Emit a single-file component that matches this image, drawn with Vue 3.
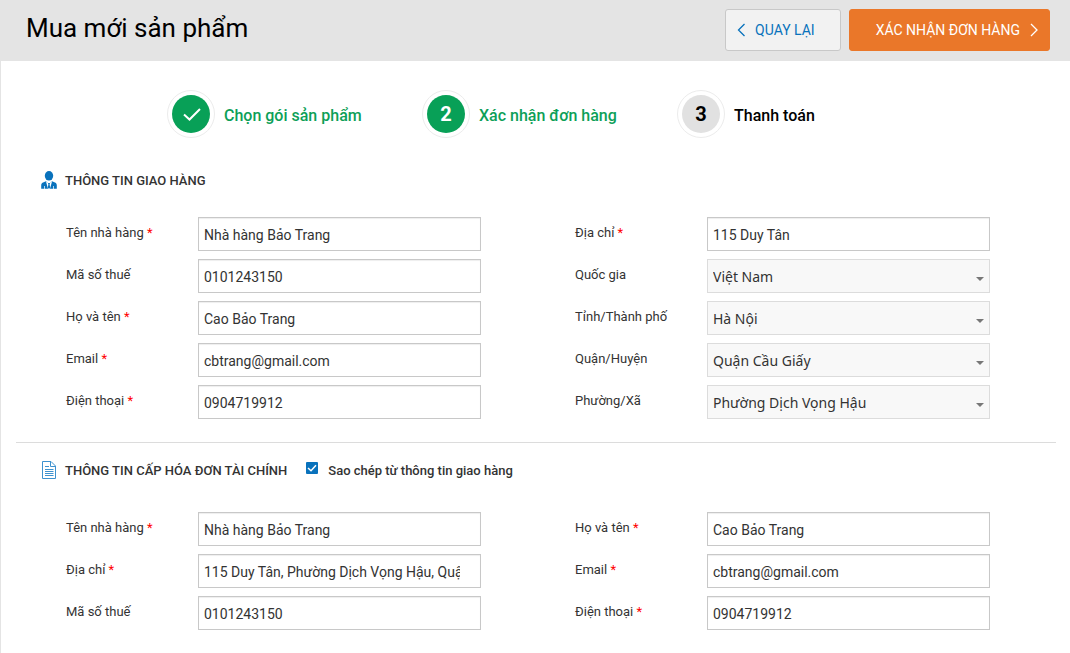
<script setup>
import { ref } from 'vue'

const steps = [
  { label: 'Chọn gói sản phẩm', state: 'done' },
  { label: 'Xác nhận đơn hàng', state: 'active' },
  { label: 'Thanh toán', state: 'next' },
]

const shipping = ref([
  [
    { id: 's-name', label: 'Tên nhà hàng', required: true, value: 'Nhà hàng Bảo Trang' },
    { id: 's-tax', label: 'Mã số thuế', value: '0101243150' },
    { id: 's-person', label: 'Họ và tên', required: true, value: 'Cao Bảo Trang' },
    { id: 's-email', label: 'Email', required: true, value: 'cbtrang@gmail.com' },
    { id: 's-phone', label: 'Điện thoại', required: true, value: '0904719912' },
  ],
  [
    { id: 's-address', label: 'Địa chỉ', required: true, value: '115 Duy Tân' },
    { id: 's-country', label: 'Quốc gia', value: 'Việt Nam', select: true },
    { id: 's-city', label: 'Tỉnh/Thành phố', value: 'Hà Nội', select: true },
    { id: 's-district', label: 'Quận/Huyện', value: 'Quận Cầu Giấy', select: true },
    { id: 's-ward', label: 'Phường/Xã', value: 'Phường Dịch Vọng Hậu', select: true },
  ],
])

const invoice = ref([
  [
    { id: 'i-name', label: 'Tên nhà hàng', required: true, value: 'Nhà hàng Bảo Trang' },
    { id: 'i-address', label: 'Địa chỉ', required: true, value: '115 Duy Tân, Phường Dịch Vọng Hậu, Quận Cầu Giấy, Hà Nội' },
    { id: 'i-tax', label: 'Mã số thuế', value: '0101243150' },
  ],
  [
    { id: 'i-person', label: 'Họ và tên', required: true, value: 'Cao Bảo Trang' },
    { id: 'i-email', label: 'Email', required: true, value: 'cbtrang@gmail.com' },
    { id: 'i-phone', label: 'Điện thoại', required: true, value: '0904719912' },
  ],
])

const sections = [
  { key: 'shipping', title: 'THÔNG TIN GIAO HÀNG', columns: shipping },
  { key: 'invoice', title: 'THÔNG TIN CẤP HÓA ĐƠN TÀI CHÍNH', columns: invoice },
]
const copyInfo = ref(true)
</script>

<template>
  <div class="page">
    <header class="topbar">
      <h1>Mua mới sản phẩm</h1>
      <div class="actions">
        <button type="button" class="btn back">
          <svg width="8" height="14" viewBox="0 0 8 14"><path d="M7.500 1 1.500 7 7.500 13" /></svg>
          QUAY LẠI
        </button>
        <button type="button" class="btn confirm">
          XÁC NHẬN ĐƠN HÀNG
          <svg width="8" height="14" viewBox="0 0 8 14"><path d="M1 1 7 7 1 13" /></svg>
        </button>
      </div>
    </header>

    <main>
      <ol class="steps">
        <li v-for="(step, i) in steps" :key="step.label" :class="step.state">
          <span class="ring">
            <span class="disc">
              <svg v-if="step.state === 'done'" width="20" height="16" viewBox="0 0 20 16"><path d="M3 8.500 8.500 13.500 19 3" /></svg>
              <template v-else>{{ i + 1 }}</template>
            </span>
          </span>
          <span class="step-label">{{ step.label }}</span>
        </li>
      </ol>

      <section v-for="section in sections" :key="section.key" :class="section.key">
        <div class="heading">
          <svg v-if="section.key === 'shipping'" class="icon" width="16" height="18" viewBox="0 0 16 18">
            <ellipse cx="8" cy="4.800" rx="4.200" ry="4.800" fill="#0972bc" />
            <path d="M5 10.300 2 11.400C.6 12 .2 13 .2 14.500V17.800H15.800V14.500C15.800 13 15.400 12 14 11.400L11 10.300 8 13Z" fill="#0972bc" />
            <path d="M5 10.500 7 17.800H9L11 10.500 8 12.500Z" fill="#fff" />
            <path d="M7 12H9L8.600 13.500 9.200 16.500 8 17.800 6.800 16.500 7.400 13.500Z" fill="#0972bc" />
            <path d="M3.500 15V18M12.500 15V18" stroke="#fff" stroke-width=".7" />
          </svg>
          <svg v-else class="icon" width="16" height="18" viewBox="0 0 16 18" fill="none" stroke="#3e92cf">
            <path d="M1.500.500H10L14.500 5V17.500H1.500Z" />
            <path d="M9.500.500V5.500H14.500" />
            <path d="M4 5.500H8M4 8.500H12.500M4 10.500H12.500M4 12.500H12.500M4 14.500H12.500" />
          </svg>
          <h2>{{ section.title }}</h2>
          <label v-if="section.key === 'invoice'" class="copy">
            <input v-model="copyInfo" type="checkbox" />
            <span class="box">
              <svg v-if="copyInfo" width="12" height="12" viewBox="0 0 12 12"><path d="M2 6 5 8.800 10 3.200" /></svg>
            </span>
            Sao chép từ thông tin giao hàng
          </label>
        </div>
        <div class="fields">
          <div v-for="(column, c) in section.columns.value" :key="c" class="column">
            <div v-for="field in column" :key="field.id" class="field">
              <label :for="field.id">{{ field.label }} <b v-if="field.required">*</b></label>
              <div v-if="field.select" class="select">
                <select :id="field.id" v-model="field.value">
                  <option>{{ field.value }}</option>
                </select>
                <svg width="8" height="4" viewBox="0 0 8 4"><path d="M0 0H8L4 4Z" /></svg>
              </div>
              <div v-else class="text">
                <input :id="field.id" v-model="field.value" type="text" />
              </div>
            </div>
          </div>
        </div>
      </section>
    </main>
  </div>
</template>

<style>
body {
  margin: 0;
  background: #fff;
}
</style>

<style scoped>
.page {
  min-height: 100vh;
  box-sizing: border-box;
  font-family: Roboto, "Noto Sans", sans-serif;
  font-size: 13px;
  color: #333;
}
.topbar {
  display: flex;
  justify-content: space-between;
  align-items: center;
  box-sizing: border-box;
  height: 61px;
  padding: 0 20px 1px 26px;
  background: #e4e4e4;
}
h1 {
  margin: 0 0 4px;
  font-size: 26px;
  line-height: 32px;
  font-weight: 400;
  color: #000;
}
.actions {
  display: flex;
  gap: 8px;
}
.btn {
  display: flex;
  align-items: center;
  gap: 10px;
  box-sizing: border-box;
  height: 42px;
  border: 1px solid #c8c8c8;
  border-radius: 3px;
  font: 400 14px/20px Roboto, sans-serif;
}
.btn svg {
  fill: none;
  stroke: currentColor;
  stroke-width: 1.3;
}
.back {
  padding: 0 25px 0 11px;
  background: #f2f2f2;
  color: #0972bc;
}
.confirm {
  padding: 0 11px 0 26px;
  border-color: #ea7729;
  background: #ea7729;
  color: #fff;
}
main {
  min-height: calc(100vh - 61px);
  box-sizing: border-box;
  border-left: 1px solid #e4e4e4;
  padding: 29px 14px 16px 15px;
}
.steps {
  display: grid;
  grid-template-columns: repeat(3, 255px);
  margin: 0;
  padding: 0 0 0 151px;
  list-style: none;
}
.steps li {
  display: flex;
  align-items: center;
  gap: 9px;
  font-size: 16px;
  line-height: 20px;
  font-weight: 500;
  color: #000;
}
.steps .done,
.steps .active {
  color: #0d9f58;
}
.step-label {
  padding-top: 3px;
}
.ring {
  box-sizing: border-box;
  padding: 4px;
  border: 1px solid #ececec;
  border-radius: 50%;
}
.disc {
  display: flex;
  align-items: center;
  justify-content: center;
  width: 38px;
  height: 38px;
  border-radius: 50%;
  background: #08a057;
  font-size: 20px;
  font-weight: 700;
  color: #fff;
}
.disc svg {
  fill: none;
  stroke: #fff;
  stroke-width: 2;
}
.next .disc {
  background: #e1e1e1;
  color: #000;
}
section {
  padding: 32px 0 23px;
}
.invoice {
  padding-top: 17px;
  border-top: 1px solid #dcdcdc;
}
.heading {
  display: flex;
  align-items: center;
  height: 20px;
  padding-left: 25px;
}
.icon {
  margin-right: 8px;
}
h2 {
  margin: 0;
  padding-top: 2px;
  font-size: 13px;
  line-height: 20px;
  font-weight: 500;
}
.copy {
  position: relative;
  display: flex;
  align-items: center;
  margin-left: 19px;
  font-weight: 500;
}
.copy input {
  position: absolute;
  width: 12px;
  height: 12px;
  margin: 0;
  opacity: 0;
}
.box {
  display: flex;
  width: 12px;
  height: 12px;
  margin: 0 10px 4px 0;
  border-radius: 1px;
  background: #0972bc;
}
.box svg {
  fill: none;
  stroke: #fff;
  stroke-width: 1.5;
}
.fields {
  display: grid;
  grid-template-columns: 1fr 1fr;
  gap: 94px;
  padding: 27px 66px 0 50px;
}
.invoice .fields {
  padding-top: 32px;
}
.column {
  display: grid;
  gap: 8px;
  align-content: start;
}
.field {
  display: grid;
  grid-template-columns: 132px minmax(0, 1fr);
}
.field > label {
  padding-top: 6px;
  line-height: 20px;
}
b {
  font-weight: 400;
  color: #f00;
}
.text,
.select {
  display: flex;
  box-sizing: border-box;
  height: 34px;
  border: 1px solid #c8c8c8;
}
.text {
  padding: 0 20px 0 5px;
  box-shadow: inset 0 1px 1px #eee;
}
.text input,
select {
  flex: 1;
  min-width: 0;
  margin: 0;
  border: 0;
  outline: 0;
  background: transparent;
  color: #333;
}
.text input {
  padding: 2px 0 0;
  font: 400 14px/20px Roboto, sans-serif;
}
.select {
  position: relative;
  border-color: #dcdcdc;
  background: #f8f8f8;
}
select {
  appearance: none;
  padding: 2px 24px 0 5px;
  font: 400 14px/20px "Noto Sans", sans-serif;
}
.select svg {
  position: absolute;
  right: 5px;
  top: 17px;
  fill: #777;
  pointer-events: none;
}
</style>
